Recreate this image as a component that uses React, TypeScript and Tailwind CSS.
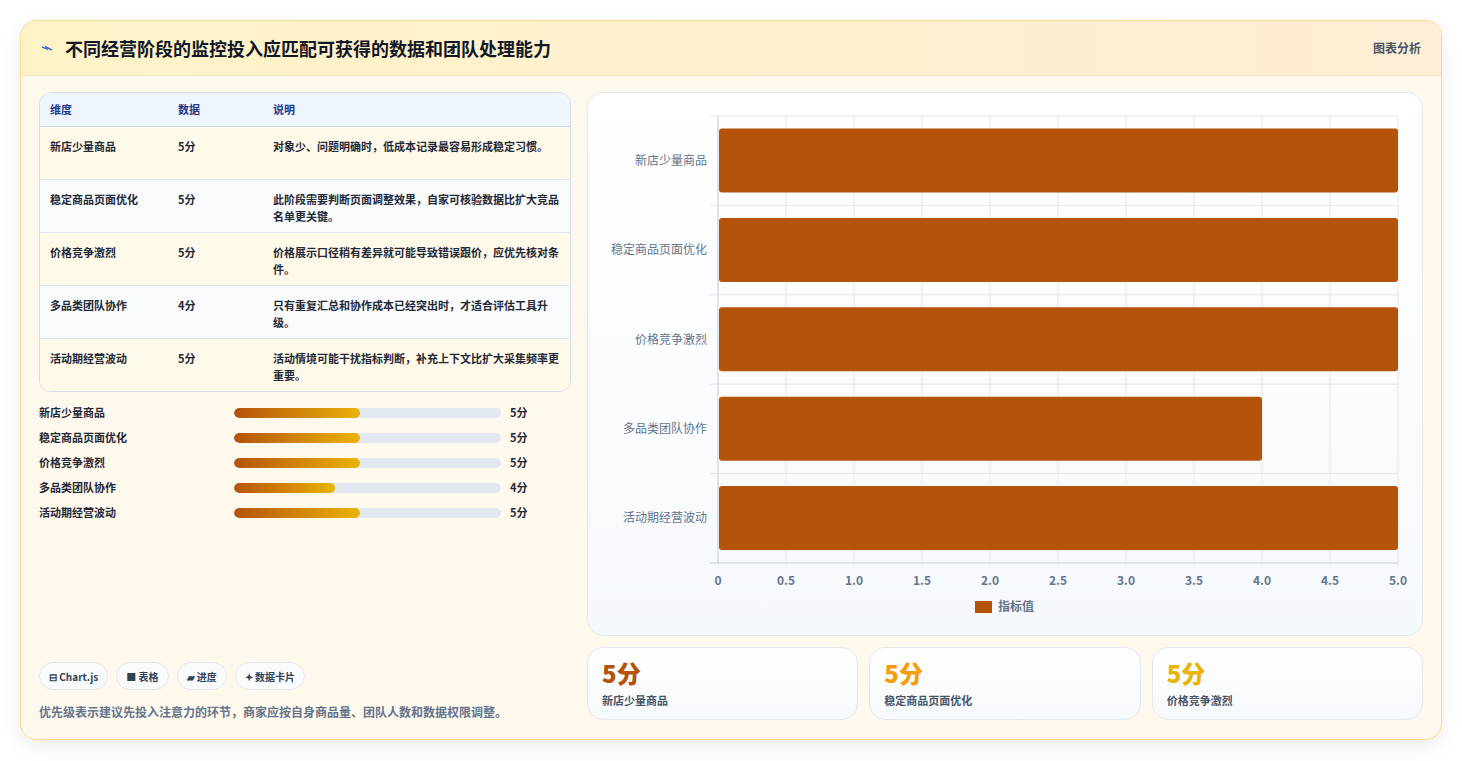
const font = { fontFamily: '"Noto Sans CJK SC", "Noto Sans", sans-serif' };

const rows = [
  { name: "新店少量商品", value: 5, note: "对象少、问题明确时，低成本记录最容易形成稳定习惯。" },
  { name: "稳定商品页面优化", value: 5, note: "此阶段需要判断页面调整效果，自家可核验数据比扩大竞品名单更关键。" },
  { name: "价格竞争激烈", value: 5, note: "价格展示口径稍有差异就可能导致错误跟价，应优先核对条件。" },
  { name: "多品类团队协作", value: 4, note: "只有重复汇总和协作成本已经突出时，才适合评估工具升级。" },
  { name: "活动期经营波动", value: 5, note: "活动情境可能干扰指标判断，补充上下文比扩大采集频率更重要。" },
];

function Chart() {
  const x0 = 130, x1 = 810, y0 = 23, y1 = 470;
  const band = (y1 - y0) / 5;
  const ticks = [0, 0.5, 1, 1.5, 2, 2.5, 3, 3.5, 4, 4.5, 5];
  const sx = (v: number) => x0 + (v / 5) * (x1 - x0);
  return (
    <svg width="834" height="544" viewBox="0 0 834 544" className="block">
      {ticks.map((t) => (
        <line key={t} x1={sx(t)} x2={sx(t)} y1={y0} y2={y1 + 6} stroke="#e5e7eb" />
      ))}
      {[0, 1, 2, 3, 4, 5].map((i) => (
        <line key={i} x1={x0 - 8} x2={x1} y1={y0 + i * band} y2={y0 + i * band} stroke="#e5e7eb" />
      ))}
      <line x1={x0} x2={x0} y1={y0} y2={y1} stroke="#cbd5e1" />
      <line x1={x0 - 8} x2={x1} y1={y1} y2={y1} stroke="#cbd5e1" />
      {rows.map((r, i) => (
        <g key={r.name}>
          <rect x={x0 + 1} y={y0 + i * band + 12.5} width={sx(r.value) - x0 - 1} height={64} rx={3} fill="#b45309" />
          <text x={x0 - 11} y={y0 + i * band + band / 2 + 4} textAnchor="end" fontSize="12" fill="#64748b" style={font}>
            {r.name}
          </text>
        </g>
      ))}
      {ticks.map((t) => (
        <text key={t} x={sx(t)} y={y1 + 22} textAnchor="middle" fontSize="12" fontWeight="600" fill="#64748b" style={font}>
          {t === 0 || t === 5 ? (t === 0 ? "0" : "5.0") : t.toFixed(1)}
        </text>
      ))}
      <rect x={387} y={508} width={17} height={12} fill="#b45309" />
      <text x={410} y={518} fontSize="12" fontWeight="600" fill="#64748b" style={font}>指标值</text>
    </svg>
  );
}

export default function App() {
  return (
    <div className="min-h-screen bg-white p-5" style={font}>
      <div className="rounded-2xl border border-[#fcd98a] bg-[#fff8ec] shadow-[0_6px_20px_rgba(0,0,0,0.08)] overflow-hidden h-[720px] flex flex-col">
        {/* header */}
        <div className="h-[55px] flex items-center justify-between px-5 bg-gradient-to-r from-[#fef3c7] to-[#ffedd5] border-b border-[#f3e3c2]">
          <div className="flex items-center gap-3">
            <svg width="12" height="8" viewBox="0 0 12 8"><path d="M1 3 L6 5 L5 3 L11 6" stroke="#3b6fd8" strokeWidth="1.4" fill="none" /></svg>
            <h1 className="text-[18px] font-bold text-[#111827]">不同经营阶段的监控投入应匹配可获得的数据和团队处理能力</h1>
          </div>
          <span className="text-[12px] font-semibold text-[#475569]">图表分析</span>
        </div>
        {/* body */}
        <div className="flex-1 flex gap-4 px-[18px] pt-[16px] pb-[18px]">
          <div className="w-[534px] flex flex-col">
            <div className="rounded-xl border border-[#d5dde8] overflow-hidden bg-white">
              <table className="w-full text-[11px] border-collapse">
                <thead>
                  <tr className="bg-[#eef5fd] text-[#1e3a8a] font-semibold h-[33px] border-b border-[#cfdcec]">
                    <td className="pl-[10px] w-[128px]">维度</td>
                    <td className="pl-[10px] w-[95px]">数据</td>
                    <td className="pl-[10px]">说明</td>
                  </tr>
                </thead>
                <tbody>
                  {rows.map((r, i) => (
                    <tr key={r.name} className={`h-[53px] align-top text-[#1f2937] font-semibold ${i % 2 === 0 ? "bg-[#fff9e9]" : "bg-[#f8fafc]"} ${i < 4 ? "border-b border-[#e2e8f0]" : ""}`}>
                      <td className="pl-[10px] pt-[11px]">{r.name}</td>
                      <td className="pl-[10px] pt-[11px]">{r.value}分</td>
                      <td className="pl-[10px] pr-[10px] pt-[11px] leading-[17px]">{r.note}</td>
                    </tr>
                  ))}
                </tbody>
              </table>
            </div>
            <div className="mt-[12px] flex flex-col gap-[8px]">
              {rows.map((r) => (
                <div key={r.name} className="flex items-center h-[17px] text-[11px] font-semibold text-[#1f2937]">
                  <span className="w-[195px]">{r.name}</span>
                  <div className="w-[267px] h-[10px] rounded-full bg-[#e2e8f0] overflow-hidden">
                    <div className="h-full rounded-full bg-gradient-to-r from-[#b45309] to-[#eab308]" style={{ width: `${(r.value / 10.6) * 100}%` }} />
                  </div>
                  <span className="ml-[9px]">{r.value}分</span>
                </div>
              ))}
            </div>
            <div className="mt-auto flex gap-2">
              {["⊟ Chart.js", "■ 表格", "▰ 进度", "✦ 数据卡片"].map((c) => (
                <span key={c} className="h-[28px] px-[9px] flex items-center rounded-full border border-[#e5e7eb] bg-[#f8fafc] text-[10px] font-semibold text-[#334155]">{c}</span>
              ))}
            </div>
            <p className="mt-[13px] text-[12px] font-semibold text-[#64748b]">优先级表示建议先投入注意力的环节，商家应按自身商品量、团队人数和数据权限调整。</p>
          </div>
          <div className="flex-1 flex flex-col gap-[11px]">
            <div className="h-[544px] rounded-2xl border border-[#e2e8f0] bg-gradient-to-b from-white to-[#f6f9fc] overflow-hidden">
              <Chart />
            </div>
            <div className="grid grid-cols-3 gap-[11px] h-[73px]">
              {rows.slice(0, 3).map((r, i) => (
                <div key={r.name} className="rounded-2xl border border-[#e2e8f0] bg-gradient-to-b from-white to-[#f6f9fc] px-[14px] pt-[10px]">
                  <div className={`text-[24px] leading-[30px] font-extrabold ${["text-[#b45309]", "text-[#f59e0b]", "text-[#eab308]"][i]}`}>{r.value}分</div>
                  <div className="text-[11px] font-semibold text-[#475569] mt-[4px]">{r.name}</div>
                </div>
              ))}
            </div>
          </div>
        </div>
      </div>
    </div>
  );
}
